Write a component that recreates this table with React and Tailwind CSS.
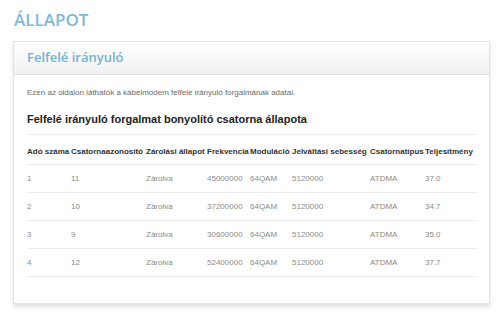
import React from 'react'

const cols = ['w-[44px]', 'w-[75px]', 'w-[61px]', 'w-[43px]', 'w-[42px]', 'w-[78px]', 'w-[55px]', 'w-[53px]']

const headers = ['Adó száma', 'Csatornaazonosító', 'Zárolási állapot', 'Frekvencia', 'Moduláció', 'Jelváltási sebesség', 'Csatornatípus', 'Teljesítmény']

const rows = [
  ['1', '11', 'Zárolva', '45000000', '64QAM', '5120000', 'ATDMA', '37.0'],
  ['2', '10', 'Zárolva', '37200000', '64QAM', '5120000', 'ATDMA', '34.7'],
  ['3', '9', 'Zárolva', '30600000', '64QAM', '5120000', 'ATDMA', '35.0'],
  ['4', '12', 'Zárolva', '52400000', '64QAM', '5120000', 'ATDMA', '37.7'],
]

export default function App() {
  return (
    <div className="w-[500px] h-[327px] bg-white overflow-hidden font-['Liberation_Sans',Arial,sans-serif]">
      <h1 className="pl-[14px] pt-[8px] h-[41px] text-[17px] leading-[24px] text-[#80b9d6] font-semibold font-['Open_Sans',sans-serif]">
        ÁLLAPOT
      </h1>
      <div className="ml-[13px] w-[477px] h-[263px] border border-[#e3e3e3] bg-white shadow-[0_3px_4px_rgba(0,0,0,0.12)]">
        <div className="h-[33px] border-b border-[#e2e2e2] bg-gradient-to-b from-white to-[#f1f1f1] pl-[13px] flex items-center">
          <span className="text-[13px] text-[#72b2d5] font-semibold font-['Open_Sans',sans-serif]">Felfelé irányuló</span>
        </div>
        <div className="px-[13px]">
          <p className="mt-[13px] text-[8px] leading-[10px] text-[#6a6a6a]">
            Ezen az oldalon láthatók a kábelmodem felfelé irányuló forgalmának adatai.
          </p>
          <h2 className="mt-[14px] text-[11px] leading-[14px] font-bold text-[#222]">
            Felfelé irányuló forgalmat bonyolító csatorna állapota
          </h2>
          <div className="mt-[8px] w-[451px] border-t border-[#ececec]">
            <div className="flex h-[30px] pt-[4px] items-center border-b border-[#ececec] text-[8px] font-bold text-[#333] whitespace-nowrap">
              {headers.map((h, i) => (
                <div key={i} className={cols[i]}>{h}</div>
              ))}
            </div>
            {rows.map((r, ri) => (
              <div key={ri} className="flex h-[28px] items-center border-b border-[#ececec] text-[8px] text-[#8a8a8a]">
                {r.map((c, i) => (
                  <div key={i} className={cols[i]}>{c}</div>
                ))}
              </div>
            ))}
          </div>
        </div>
      </div>
    </div>
  )
}
